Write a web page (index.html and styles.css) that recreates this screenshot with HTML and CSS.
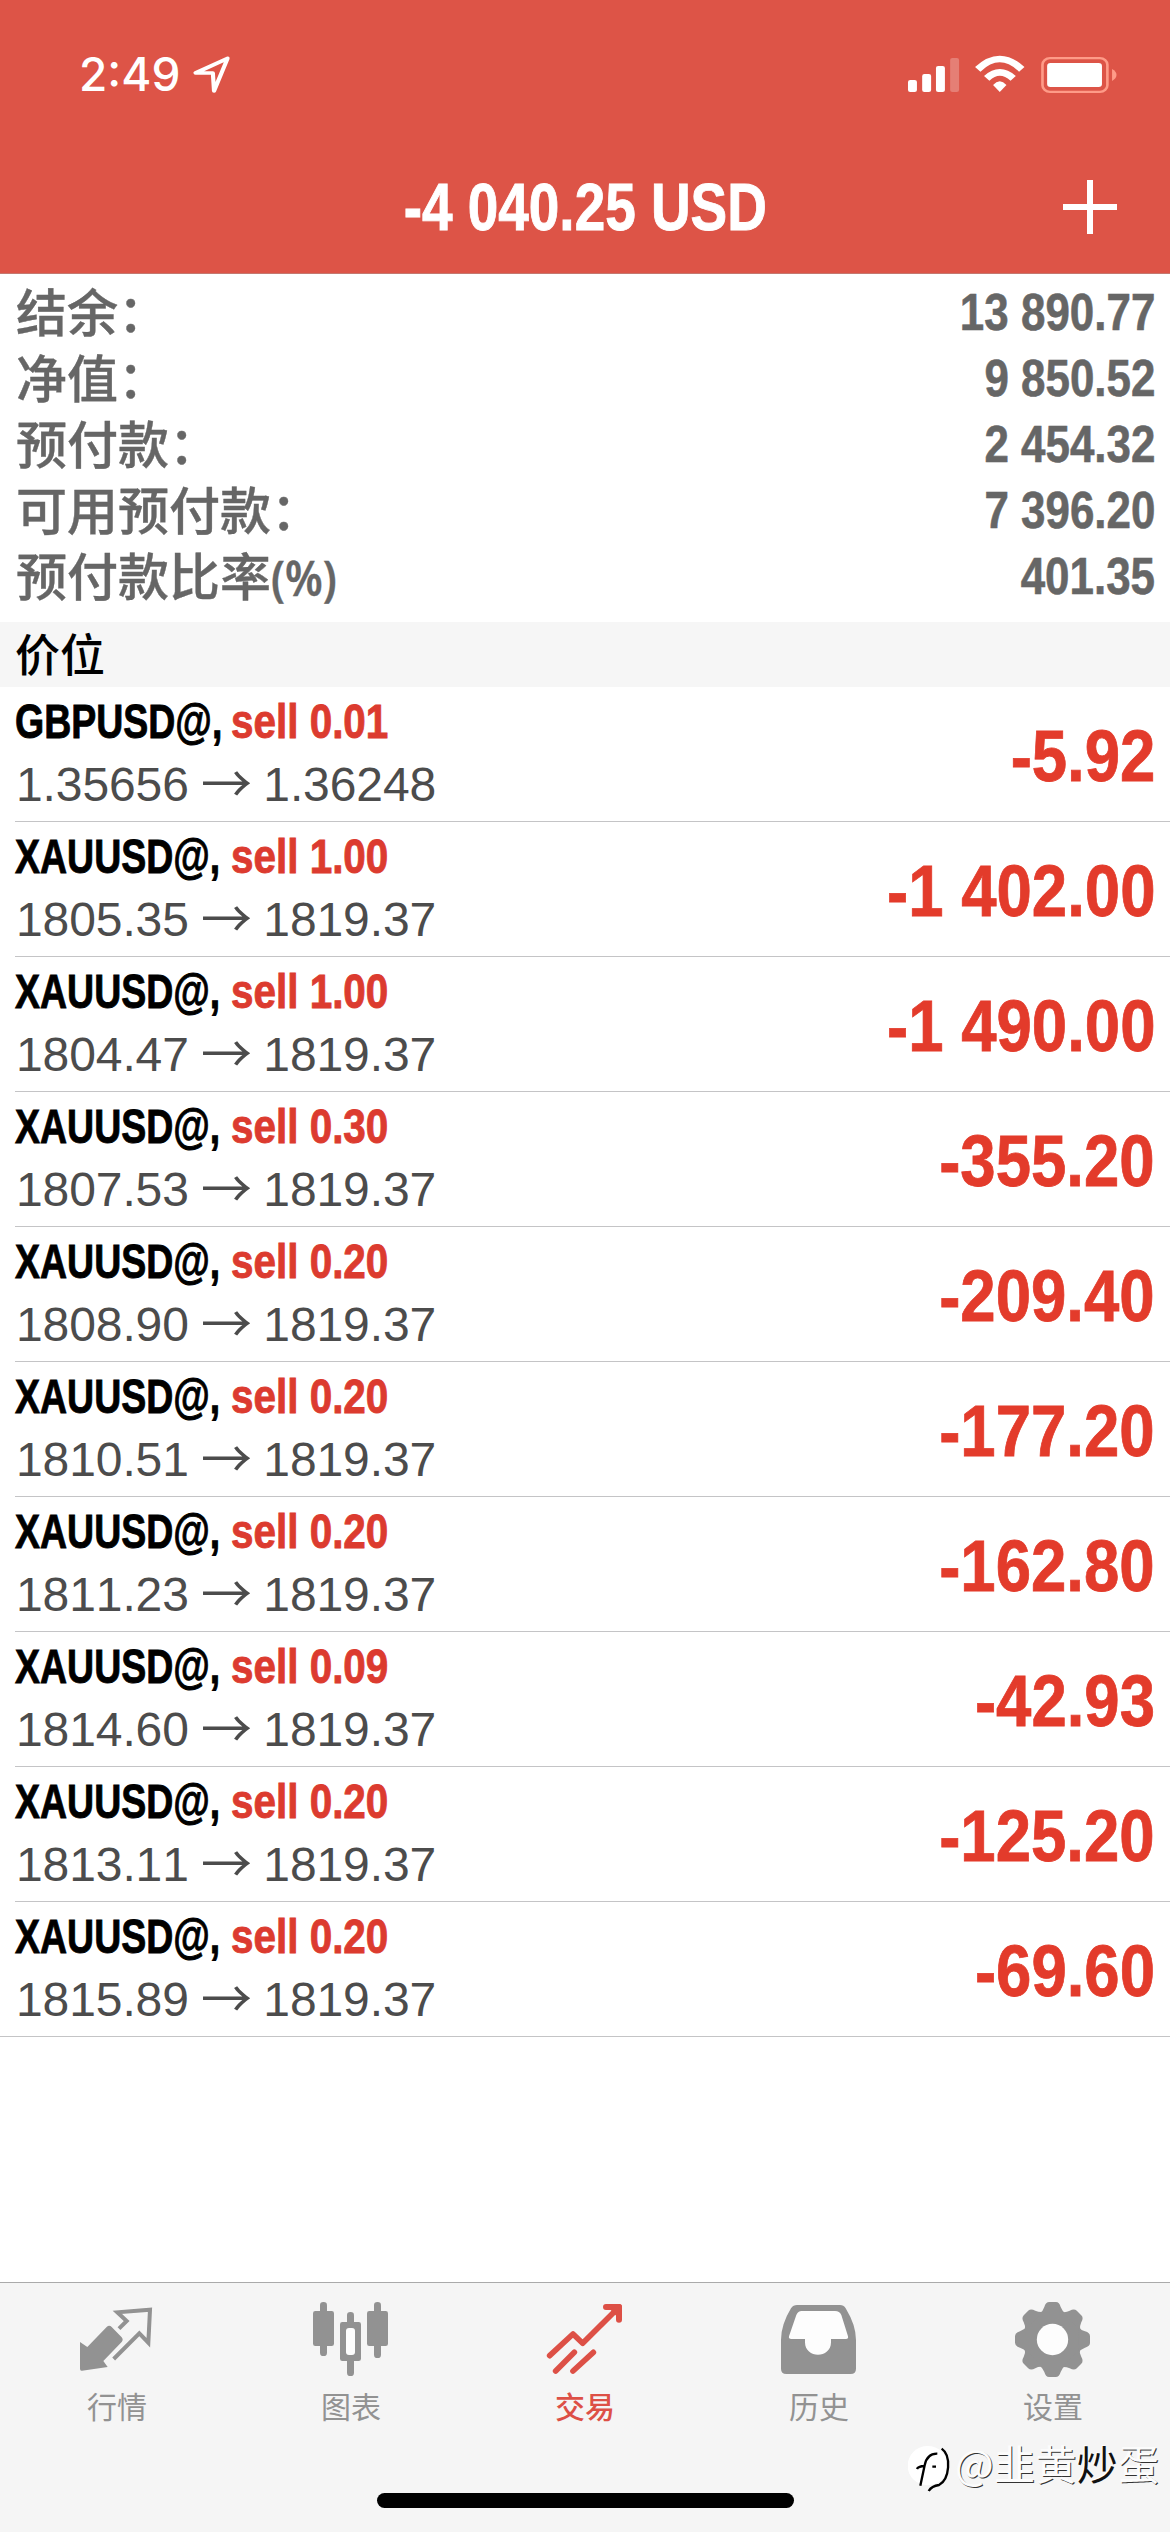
FILE: index.html
```html
<!DOCTYPE html>
<html lang="zh-CN">
<head>
<meta charset="utf-8">
<title>交易</title>
<link rel="stylesheet" href="styles.css">
</head>
<body>
<div class="app">
  <header class="header">
    <div class="status">
      <span class="time">2:49</span>
      <svg class="locate" viewBox="510 160 114 126" preserveAspectRatio="none"><path d="M607 176L522 220H568L571 274Z" fill="none" stroke="#fff" stroke-width="11" stroke-linejoin="round"/></svg>
      <svg class="signals" viewBox="855 150 579 138" preserveAspectRatio="none">
        <g fill="#fff">
          <rect x="863" y="237" width="24" height="36" rx="6"/>
          <rect x="901" y="219" width="24" height="54" rx="6"/>
          <rect x="938" y="195" width="24" height="78" rx="6"/>
          <rect x="976" y="171" width="24" height="102" rx="6" opacity=".25"/>
          <path d="M1109 273L1091 252Q1109 230 1127 252Z"/>
          <rect x="1236" y="186" width="147" height="72" rx="9"/>
        </g>
        <path d="M1050 205Q1109 143 1168 205" fill="none" stroke="#fff" stroke-width="20"/>
        <path d="M1074 232Q1109 196 1145 232" fill="none" stroke="#fff" stroke-width="20"/>
        <rect x="1223.500" y="171.500" width="174" height="101" rx="20" fill="none" stroke="#fe9b88" stroke-width="7"/>
        <path d="M1410 204Q1422 212 1422 222T1410 240Z" fill="#fe9b88"/>
      </svg>
    </div>
    <div class="nav">
      <h1 class="title">-4 040.25 USD</h1>
      <svg class="plus" viewBox="0 0 54 54"><path d="M0 27H54M27 0V54" stroke="#fff" stroke-width="6"/></svg>
    </div>
  </header>

  <section class="summary">
    <div class="line"><span>结余：</span><b>13 890.77</b></div>
    <div class="line"><span>净值：</span><b>9 850.52</b></div>
    <div class="line"><span>预付款：</span><b>2 454.32</b></div>
    <div class="line"><span>可用预付款：</span><b>7 396.20</b></div>
    <div class="line"><span>预付款比率<i class="percent">(%)</i></span><b>401.35</b></div>
  </section>

  <h2 class="group">价位</h2>

  <ul class="positions">
    <li class="row"><div class="info"><div class="deal"><span class="symbol">GBPUSD@,</span><span class="side">sell 0.01</span></div><div class="price">1.35656 <span class="arrow">→</span> 1.36248</div></div><div class="profit">-5.92</div></li>
    <li class="row"><div class="info"><div class="deal"><span class="symbol">XAUUSD@,</span><span class="side">sell 1.00</span></div><div class="price">1805.35 <span class="arrow">→</span> 1819.37</div></div><div class="profit">-1 402.00</div></li>
    <li class="row"><div class="info"><div class="deal"><span class="symbol">XAUUSD@,</span><span class="side">sell 1.00</span></div><div class="price">1804.47 <span class="arrow">→</span> 1819.37</div></div><div class="profit">-1 490.00</div></li>
    <li class="row"><div class="info"><div class="deal"><span class="symbol">XAUUSD@,</span><span class="side">sell 0.30</span></div><div class="price">1807.53 <span class="arrow">→</span> 1819.37</div></div><div class="profit">-355.20</div></li>
    <li class="row"><div class="info"><div class="deal"><span class="symbol">XAUUSD@,</span><span class="side">sell 0.20</span></div><div class="price">1808.90 <span class="arrow">→</span> 1819.37</div></div><div class="profit">-209.40</div></li>
    <li class="row"><div class="info"><div class="deal"><span class="symbol">XAUUSD@,</span><span class="side">sell 0.20</span></div><div class="price">1810.51 <span class="arrow">→</span> 1819.37</div></div><div class="profit">-177.20</div></li>
    <li class="row"><div class="info"><div class="deal"><span class="symbol">XAUUSD@,</span><span class="side">sell 0.20</span></div><div class="price">1811.23 <span class="arrow">→</span> 1819.37</div></div><div class="profit">-162.80</div></li>
    <li class="row"><div class="info"><div class="deal"><span class="symbol">XAUUSD@,</span><span class="side">sell 0.09</span></div><div class="price">1814.60 <span class="arrow">→</span> 1819.37</div></div><div class="profit">-42.93</div></li>
    <li class="row"><div class="info"><div class="deal"><span class="symbol">XAUUSD@,</span><span class="side">sell 0.20</span></div><div class="price">1813.11 <span class="arrow">→</span> 1819.37</div></div><div class="profit">-125.20</div></li>
    <li class="row"><div class="info"><div class="deal"><span class="symbol">XAUUSD@,</span><span class="side">sell 0.20</span></div><div class="price">1815.89 <span class="arrow">→</span> 1819.37</div></div><div class="profit">-69.60</div></li>
  </ul>

  <nav class="tabs">
    <div class="tab">
      <svg class="icon" viewBox="231 114 240 240">
        <path d="M240 246L262 261L320 201Q328 194 335 201L365 232Q371 239 365 246L310 303L323 321L246 332Q240 333 240 326Z" fill="currentColor"/>
        <path d="M357 206L380 183L352 157L450 149L445 248L418 220L341 297" fill="none" stroke="currentColor" stroke-width="12"/>
      </svg>
      <span>行情</span>
    </div>
    <div class="tab">
      <svg class="icon" viewBox="933 114 240 240" fill="currentColor">
        <rect x="960" y="126" width="21" height="162" rx="10"/><rect x="939" y="153" width="63" height="105" rx="7"/>
        <rect x="1122" y="126" width="21" height="168" rx="10"/><rect x="1101" y="153" width="63" height="105" rx="7"/>
        <rect x="1041" y="156" width="21" height="192" rx="10"/><rect x="1020" y="186" width="63" height="117" rx="7"/>
        <rect x="1038" y="204" width="27" height="81" rx="9" fill="#fdfdfd"/>
      </svg>
      <span>图表</span>
    </div>
    <div class="tab active">
      <svg class="icon" viewBox="285 114 240 240" fill="none" stroke="currentColor" stroke-width="18" stroke-linejoin="round">
        <path d="M299 287L369 222L398 250L505 143M317 333L373 277M369 333L430 277" stroke-linecap="round" stroke-width="17"/>
        <path d="M468 141H507V179" stroke-linecap="round"/><path d="M486 141H507V163Z" fill="currentColor"/>
      </svg>
      <span>交易</span>
    </div>
    <div class="tab">
      <svg class="icon" viewBox="987 114 240 240">
        <path d="M1041 135H1170Q1181 135 1187 145Q1218 196 1218 240V326Q1218 342 1202 342H1009Q993 342 993 326V240Q993 194 1023 145Q1030 135 1041 135Z" fill="currentColor"/>
        <path d="M1055 153H1155Q1169 153 1174 165L1194 229Q1196 237 1188 237H1143V247C1143 297 1065 297 1065 247V237H1024Q1015 237 1017 229L1039 165Q1044 153 1055 153Z" fill="#fdfdfd"/>
      </svg>
      <span>历史</span>
    </div>
    <div class="tab">
      <svg class="icon" viewBox="459 114 240 240">
        <g fill="currentColor">
          <circle cx="577.500" cy="238.500" r="87"/>
          <path id="tooth" d="M539 160Q549 154 553 141Q557 126 568 126H588Q598 126 602 141Q607 154 616 160Z"/>
          <use href="#tooth" transform="rotate(45 577.500 238.500)"/><use href="#tooth" transform="rotate(90 577.500 238.500)"/>
          <use href="#tooth" transform="rotate(135 577.500 238.500)"/><use href="#tooth" transform="rotate(180 577.500 238.500)"/>
          <use href="#tooth" transform="rotate(225 577.500 238.500)"/><use href="#tooth" transform="rotate(270 577.500 238.500)"/>
          <use href="#tooth" transform="rotate(315 577.500 238.500)"/>
        </g>
        <circle cx="577.500" cy="238.500" r="47" fill="#fdfdfd"/>
      </svg>
      <span>设置</span>
    </div>
  </nav>
  <div class="home"></div>
  <div class="credit">
    <svg class="badge" viewBox="144 555 132 147">
      <ellipse cx="203" cy="620" rx="60" ry="59" fill="#fff"/>
      <path d="M245 569C275 590 269 661 237 678Q215 681 206 696" fill="none" stroke="#000" stroke-width="7"/>
      <path d="M181 680L194 619Q201 583 232 584M171 630Q174 622 194 621M217 623H228" fill="none" stroke="#000" stroke-width="7"/>
    </svg>
    <span class="author">@韭黄<span class="ink">炒</span>蛋</span>
  </div>
</div>
</body>
</html>
```

FILE: styles.css
```css
* { box-sizing: border-box; margin: 0; padding: 0; }
body { width: 1170px; height: 2532px; background: #fff; overflow: hidden; font-family: "Liberation Sans", "Noto Sans CJK SC", sans-serif; font-kerning: none; }
svg { display: block; flex: none; }
.app { position: relative; display: flex; flex-direction: column; height: 2532px; }

.header { height: 274px; background: #dd5447; color: #fff; border-bottom: 1px solid #c4786f; }
.status { display: flex; align-items: center; height: 148px; padding: 0 49px 0 79px; }
.time { width: 112px; font: 500 46px/60px Inter, sans-serif; white-space: nowrap; }
.locate { width: 43px; height: 42px; }
.signals { width: 216px; height: 46px; margin-left: auto; }
.nav { display: grid; grid-template-columns: 1fr auto 1fr; align-items: center; height: 118px; padding: 0 53px; }
.title { grid-column: 2; font-size: 66px; line-height: 80px; font-weight: 700; white-space: nowrap; transform: scaleX(.832); -webkit-text-stroke: .9px; }
.plus { width: 54px; height: 54px; justify-self: end; }

.summary { height: 348px; padding: 5px 15px 0 16px; color: #666; }
.line { display: flex; justify-content: space-between; height: 66px; line-height: 66px; }
.line span { height: 62px; font: 500 51px/62px "Noto Sans CJK SC", sans-serif; white-space: nowrap; -webkit-text-stroke: .4px; }
.line b { font-size: 52px; transform: scaleX(.845); transform-origin: right; -webkit-text-stroke: .6px; }
.line .percent { display: inline-block; font: 600 49px/60px "Noto Sans", sans-serif; transform: scaleX(.88); transform-origin: left; }

.group { height: 65px; padding-left: 15px; background: #f6f6f6; font: 500 45px/61px "Noto Sans CJK SC", sans-serif; color: #000; }

.positions { list-style: none; }
.row { display: flex; justify-content: space-between; height: 135px; margin-left: 15px; padding-right: 15px; border-bottom: 1px solid #c4c4c6; }
.row:last-child { margin-left: 0; padding-left: 15px; }
.info { padding-top: 2px; }
.deal { display: flex; height: 65px; font-size: 49px; line-height: 64px; font-weight: 700; white-space: nowrap; -webkit-text-stroke: .9px; }
.symbol { width: 216px; transform: scaleX(.765); transform-origin: left; color: #000; }
.side { transform: scaleX(.825); transform-origin: left; color: #dc3b2f; }
.price { height: 62px; padding-left: 1px; font-size: 48px; line-height: 62px; letter-spacing: -.1px; color: #4c4c4c; white-space: nowrap; }
.arrow { display: inline-block; width: 49px; margin-left: -1px; font: 400 51px/50px "Noto Sans CJK SC", sans-serif; transform: translateY(2px); }
.profit { padding-top: 3px; font-size: 73px; line-height: 132px; font-weight: 700; color: #e33b2b; white-space: nowrap; transform: scaleX(.87); transform-origin: right; -webkit-text-stroke: .8px; }

.tabs { display: grid; grid-template-columns: repeat(5, 1fr); height: 250px; margin-top: auto; padding-top: 15px; border-top: 1px solid #aaa; background: #f5f5f5; color: #929292; }
.tab { display: flex; flex-direction: column; align-items: center; gap: 7px; font: 400 30px/40px "Noto Sans CJK SC", sans-serif; }
.active { color: #dd5046; }
.active span { font-weight: 500; }
.icon { width: 80px; height: 80px; }

.home { position: absolute; left: 377px; top: 2493px; width: 417px; height: 15px; border-radius: 8px; background: #000; }
.credit { position: absolute; left: 908px; top: 2444px; display: flex; align-items: flex-start; gap: 3px; white-space: nowrap; }
.badge { width: 44px; height: 49px; }
.author { height: 49px; font: 400 41px/36px "Noto Sans CJK SC", sans-serif; letter-spacing: .3px; color: #fcfcfc; text-shadow: 1px 1px 0 #333; }
.ink { color: #111; text-shadow: -1px -1px 0 #fff; }
```
